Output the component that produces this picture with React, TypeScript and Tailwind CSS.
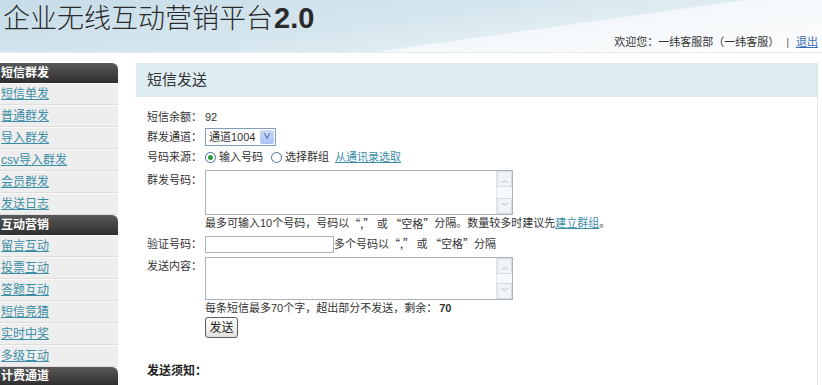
import React from 'react';

const font = { fontFamily: '"Liberation Sans", "Noto Sans CJK SC", sans-serif' };
const cjk = { fontFamily: '"Noto Sans CJK SC", sans-serif' };

function Scrollbar() {
  return (
    <div className="flex w-[16px] flex-col justify-between border-l border-[#e3e6ea] bg-[#f7f8f9]">
      <div className="flex h-[16px] items-center justify-center border border-[#d5dbe2] bg-[#f1f3f5] text-[7px] leading-none text-[#9aa6b4]">
        ︿
      </div>
      <div className="flex h-[16px] items-center justify-center border border-[#d5dbe2] bg-[#f1f3f5] text-[7px] leading-none text-[#9aa6b4]">
        ﹀
      </div>
    </div>
  );
}

function FakeTextarea({ height }: { height: string }) {
  return (
    <div className={`flex w-[308px] border border-[#a9b3bd] bg-white ${height}`}>
      <textarea className="flex-1 resize-none bg-white outline-none" />
      <Scrollbar />
    </div>
  );
}

function SideHeader({ title, last }: { title: string; last?: boolean }) {
  return (
    <div
      className={`flex items-center bg-gradient-to-b from-[#5a5a5a] to-[#2f2f2f] pl-[1px] text-[12px] font-bold text-white ${
        last ? 'h-[18px]' : 'h-[20px]'
      } rounded-tr-[6px]`}
    >
      {title}
    </div>
  );
}

function SideItem({ label }: { label: string }) {
  return (
    <div className="flex h-[22px] items-center border-b border-[#dcdcdc] bg-[#eeeeee] pl-[1px] text-[12px] text-[#3c8ea6] underline shadow-[inset_0_1px_0_#fafafa]">
      {label}
    </div>
  );
}

// “,” 或 “空格” with full-width quotes
function Separators() {
  return (
    <span style={cjk} className="whitespace-pre">
      {'“,” 或 “空格”'}
    </span>
  );
}

export default function App() {
  const group1 = ['短信单发', '普通群发', '导入群发', 'csv导入群发', '会员群发', '发送日志'];
  const group2 = ['留言互动', '投票互动', '答题互动', '短信竞猜', '实时中奖', '多级互动'];

  return (
    <div className="h-[385px] w-[822px] overflow-hidden bg-white text-[#333]" style={font}>
      {/* top banner */}
      <div className="relative h-[53px] border-b border-[#e4ecef] bg-[linear-gradient(172deg,#c6dce8_0%,#d6e6ee_45%,#dfecf2_62%,#f4f8fa_63%,#fbfcfd_100%)]">
        <div className="flex items-baseline pl-[3px] pt-[1px] text-[27px] leading-[34px] text-[#2a2a2a]">
          <span className="font-light">企业无线互动营销平台</span>
          <span className="ml-[1px] text-[29px] font-bold">2.0</span>
        </div>
        <div className="absolute bottom-[3px] right-[4px] whitespace-nowrap text-[11px] leading-[14px] text-[#333]">
          欢迎您：一纬客服部（一纬客服）
          <span className="mx-[7px] text-[#666]">|</span>
          <span className="text-[#3a6fb5] underline">退出</span>
        </div>
      </div>

      <div className="flex pt-[10px]">
        {/* sidebar */}
        <div className="w-[118px] shrink-0">
          <SideHeader title="短信群发" />
          {group1.map((g) => (
            <SideItem key={g} label={g} />
          ))}
          <SideHeader title="互动营销" />
          {group2.map((g) => (
            <SideItem key={g} label={g} />
          ))}
          <SideHeader title="计费通道" last />
        </div>

        {/* main */}
        <div className="ml-[18px] w-[682px] border-r border-[#e2e6e8]">
          <div className="flex h-[34px] items-center bg-[#deedf2] pl-[11px] text-[15px] text-[#333]">短信发送</div>

          <div className="pl-[11px] pt-[10px] text-[11px]">
            <div className="flex h-[20px] items-center">
              <span className="w-[58px]">短信余额：</span>
              <span>92</span>
            </div>
            <div className="flex h-[20px] items-center">
              <span className="w-[58px]">群发通道：</span>
              <div className="flex h-[18px] w-[71px] items-center border border-[#7f9db9] bg-white">
                <span className="flex-1 whitespace-nowrap pl-[3px] text-[11px] leading-none">通道1004</span>
                <span className="m-[1px] flex h-[14px] w-[14px] shrink-0 items-center justify-center rounded-[2px] bg-gradient-to-b from-[#c9daf8] to-[#a9c3f0] text-[8px] font-bold text-[#3a5fa8]">
                  ∨
                </span>
              </div>
            </div>
            <div className="flex h-[20px] items-center">
              <span className="w-[58px]">号码来源：</span>
              <span className="flex items-center gap-[3px]">
                <span className="flex h-[11px] w-[11px] items-center justify-center rounded-full border border-[#4a6f9a] bg-white">
                  <span className="h-[5px] w-[5px] rounded-full bg-[#2d9a3e]" />
                </span>
                输入号码
              </span>
              <span className="ml-[8px] flex items-center gap-[3px]">
                <span className="h-[11px] w-[11px] rounded-full border border-[#4a6f9a] bg-white" />
                选择群组
              </span>
              <span className="ml-[6px] text-[#3c8ea6] underline">从通讯录选取</span>
            </div>

            <div className="mt-[3px] flex">
              <span className="w-[58px] pt-[2px]">群发号码：</span>
              <FakeTextarea height="h-[45px]" />
            </div>
            <div className="flex h-[17px] items-center whitespace-nowrap pl-[58px]">
              最多可输入10个号码，号码以<Separators />分隔。数量较多时建议先
              <span className="text-[#3c8ea6] underline">建立群组</span>。
            </div>

            <div className="mt-[3px] flex h-[18px] items-center">
              <span className="w-[58px]">验证号码：</span>
              <input className="h-[17px] w-[129px] border border-[#a9b3bd] bg-white outline-none" />
              <span className="whitespace-nowrap">
                多个号码以<Separators />分隔
              </span>
            </div>

            <div className="mt-[4px] flex">
              <span className="w-[58px] pt-[1px]">发送内容：</span>
              <FakeTextarea height="h-[43px]" />
            </div>
            <div className="flex h-[17px] items-center pl-[58px]">
              每条短信最多70个字，超出部分不发送，剩余：<b className="ml-[2px]">70</b>
            </div>
            <div className="pl-[58px]">
              <button className="h-[21px] w-[33px] rounded-[3px] border border-[#55606b] bg-gradient-to-b from-[#ffffff] to-[#e3e3de] text-[12px] text-[#222]">
                发送
              </button>
            </div>

            <div
              className="mt-[24px] text-[12px] font-bold text-[#222]"
              style={{ fontFamily: '"Liberation Serif", "Noto Sans CJK SC", serif' }}
            >
              发送须知：
            </div>
          </div>
        </div>
      </div>
    </div>
  );
}
